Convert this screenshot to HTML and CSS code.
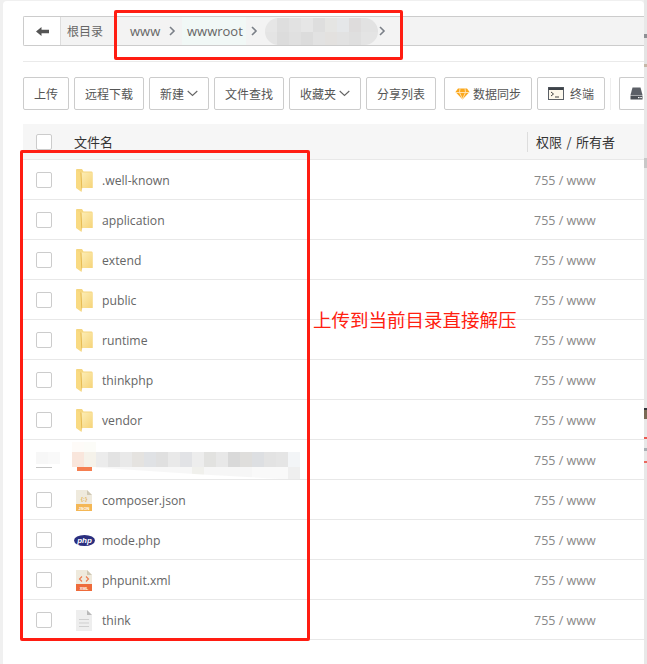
FILE: index.html
```html
<!DOCTYPE html>
<html lang="zh">
<head>
<meta charset="utf-8">
<title>文件管理</title>
<link rel="stylesheet" href="styles.css">
</head>
<body>
<svg class="defs" width="0" height="0" aria-hidden="true">
  <defs>
    <linearGradient id="folderBack" x1="0" y1="0" x2="1" y2="1">
      <stop offset="0" stop-color="#fdeeb8"/>
      <stop offset="1" stop-color="#f6d478"/>
    </linearGradient>
    <symbol id="folder" viewBox="0 0 17 23">
      <path d="M0 1 Q0 0 1 0 L6 0 L7.500 2.500 L15.500 2.500 Q16.500 2.500 16.500 3.500 L16.500 19 L0 19Z" fill="#f5d67f"/>
      <path d="M5 3.500 L16.500 3.500 L16.500 19 L5.500 19Z" fill="url(#folderBack)"/>
      <path d="M0 1 L4.500 3.500 L5.500 23 L0 19Z" fill="#f9da82"/>
      <path d="M4.500 3.500 L5.500 23 L6.200 19 L5.500 3.500Z" fill="#e5b94f"/>
    </symbol>
    <symbol id="chev" viewBox="0 0 8 10">
      <path d="M2 1 L6 5 L2 9" fill="none" stroke="#7b8088" stroke-width="1.600"/>
    </symbol>
    <symbol id="caret" viewBox="0 0 11 7">
      <path d="M.7 1 L5.500 5.500 L10.300 1" fill="none" stroke="#666" stroke-width="1.100"/>
    </symbol>
  </defs>
</svg>
<main class="panel">
  <nav class="crumbs">
    <button class="back" type="button" aria-label="返回">
      <svg width="13" height="9" viewBox="0 0 13 9"><path d="M0 4.500 L5.500 0 L5.500 2.800 L13 2.800 L13 6.200 L5.500 6.200 L5.500 9Z" fill="#555"/></svg>
    </button>
    <div class="trail">
      <span class="crumb root">根目录</span>
      <span class="crumb www">www</span>
      <svg class="chev" width="8" height="10"><use href="#chev"/></svg>
      <span class="crumb current">wwwroot</span>
      <svg class="chev" width="8" height="10"><use href="#chev"/></svg>
      <span class="crumb-blur"></span>
      <svg class="chev" width="8" height="10"><use href="#chev"/></svg>
    </div>
  </nav>
  <div class="rule"></div>
  <div class="toolbar">
    <button class="btn" type="button">上传</button>
    <button class="btn" type="button">远程下载</button>
    <button class="btn" type="button">新建<svg class="caret" width="11" height="7"><use href="#caret"/></svg></button>
    <button class="btn" type="button">文件查找</button>
    <button class="btn" type="button">收藏夹<svg class="caret" width="11" height="7"><use href="#caret"/></svg></button>
    <button class="btn" type="button">分享列表</button>
    <button class="btn sync" type="button">
      <svg class="ico" width="15" height="12" viewBox="0 0 15 12"><path d="M3 .5 L12 .5 L14.500 4 L7.500 11.500 L.5 4Z" fill="#fba81c"/><path d="M.5 4.500 L14.500 4.500 M4.500 4.500 L7.500 11 L10.500 4.500 M5 .5 L4.500 4.500 M10 .5 L10.500 4.500" stroke="#ffe7bd" stroke-width=".9" fill="none"/></svg>数据同步</button>
    <button class="btn term" type="button">
      <svg class="ico" width="16" height="13" viewBox="0 0 16 13"><rect x=".5" y=".5" width="15" height="12" fill="#fdf8ec" stroke="#5b6067"/><rect x=".5" y=".5" width="15" height="2.500" fill="#3d4249"/><path d="M3 5 L5.500 7 L3 9 M7 10 L11 10" fill="none" stroke="#444" stroke-width="1"/></svg>终端</button>
    <span class="divider"></span>
    <button class="btn drive" type="button">
      <svg width="13" height="13" viewBox="0 0 13 13"><path d="M2.500 .5 L10.500 .5 L12.500 8 L.5 8Z" fill="#5c6067"/><rect x=".5" y="8.500" width="12" height="4" fill="#4c5056"/><rect x="8" y="10" width="1.500" height="1.200" fill="#fff"/><rect x="10.300" y="10" width="1.500" height="1.200" fill="#fff"/></svg>
    </button>
  </div>

  <section class="table">
    <div class="row head">
      <span class="check"></span>
      <span class="head-name">文件名</span>
      <span class="head-perm">权限 / 所有者</span>
    </div>
    <div class="row"><span class="check"></span><span class="icon"><svg width="17" height="23"><use href="#folder"/></svg></span><span class="name">.well-known</span><span class="perm">755 / www</span></div>
    <div class="row"><span class="check"></span><span class="icon"><svg width="17" height="23"><use href="#folder"/></svg></span><span class="name">application</span><span class="perm">755 / www</span></div>
    <div class="row"><span class="check"></span><span class="icon"><svg width="17" height="23"><use href="#folder"/></svg></span><span class="name">extend</span><span class="perm">755 / www</span></div>
    <div class="row"><span class="check"></span><span class="icon"><svg width="17" height="23"><use href="#folder"/></svg></span><span class="name">public</span><span class="perm">755 / www</span></div>
    <div class="row"><span class="check"></span><span class="icon"><svg width="17" height="23"><use href="#folder"/></svg></span><span class="name">runtime</span><span class="perm">755 / www</span></div>
    <div class="row"><span class="check"></span><span class="icon"><svg width="17" height="23"><use href="#folder"/></svg></span><span class="name">thinkphp</span><span class="perm">755 / www</span></div>
    <div class="row"><span class="check"></span><span class="icon"><svg width="17" height="23"><use href="#folder"/></svg></span><span class="name">vendor</span><span class="perm">755 / www</span></div>
    <div class="row masked">
      <span class="check"></span><span class="icon"></span><span class="name"></span><span class="perm">755 / www</span>
      <span class="mask-check"></span>
      <span class="mask-sliver"></span>
      <span class="mask-top"></span>
      <span class="mask-upper"></span>
      <span class="mask-lower"></span>
      <span class="mask-tag"></span>
    </div>
    <div class="row"><span class="check"></span><span class="icon">
      <svg width="16" height="21" viewBox="0 0 16 21"><path d="M0 0 L11 0 L16 5 L16 21 L0 21Z" fill="#efeadd"/><path d="M11 0 L16 5 L11 5Z" fill="#cfc8b4"/><rect y="14" width="16" height="7" fill="#f4b755"/><text x="8" y="19.800" class="tag-text">JSON</text><text x="8" y="10.500" class="code-text json">{:}</text></svg>
    </span><span class="name">composer.json</span><span class="perm">755 / www</span></div>
    <div class="row"><span class="check"></span><span class="icon php-icon">
      <svg width="21" height="11" viewBox="0 0 21 11"><ellipse cx="10.500" cy="5.500" rx="10.500" ry="5.500" fill="#2b2f7f"/><text x="10.500" y="8" class="php-text">php</text></svg>
    </span><span class="name">mode.php</span><span class="perm">755 / www</span></div>
    <div class="row"><span class="check"></span><span class="icon">
      <svg width="16" height="21" viewBox="0 0 16 21"><path d="M0 0 L11 0 L16 5 L16 21 L0 21Z" fill="#efeadd"/><path d="M11 0 L16 5 L11 5Z" fill="#cfc8b4"/><rect y="14" width="16" height="7" fill="#ee6b3a"/><text x="8" y="19.800" class="tag-text">XML</text><path d="M6 6.500 L3.500 9 L6 11.500 M10 6.500 L12.500 9 L10 11.500" fill="none" stroke="#ee7a4c" stroke-width="1.100"/></svg>
    </span><span class="name">phpunit.xml</span><span class="perm">755 / www</span></div>
    <div class="row"><span class="check"></span><span class="icon">
      <svg width="16" height="21" viewBox="0 0 16 21"><path d="M0 0 L11 0 L16 5 L16 21 L0 21Z" fill="#eeeeee"/><path d="M11 0 L16 5 L11 5Z" fill="#b9b9b9"/><path d="M3 9.500 L13 9.500 M3 13 L13 13 M3 16.500 L13 16.500" stroke="#cfcfcf" stroke-width="1"/></svg>
    </span><span class="name">think</span><span class="perm">755 / www</span></div>
  </section>
</main>

<div class="mark mark-path"></div>
<div class="mark mark-list"></div>
<p class="note">上传到当前目录直接解压</p>
<div class="edge"></div>
</body>
</html>
```

FILE: styles.css
```css
* { box-sizing: border-box; }

html, body { height: 664px; overflow: hidden; }

body {
  position: relative;
  margin: 0;
  background: #f0f0f0;
  font-family: "Open Sans", "Noto Sans CJK SC", sans-serif;
  font-size: 12px;
  color: #555;
}

.defs { position: absolute; }

.panel {
  height: 663px;
  margin: 1px 3px 0;
  padding: 15px 0 0 20px;
  background: #fff;
  border-radius: 4px 4px 0 0;
  overflow: hidden;
}

/* breadcrumb */
.crumbs {
  display: flex;
  height: 30px;
  border: 1px solid #ccc;
  border-right: 0;
  border-radius: 2px 0 0 2px;
  background: #f3f3f3;
}

.back {
  width: 37px;
  padding: 0;
  border: 0;
  border-right: 1px solid #ddd;
  background: #fff;
  display: flex;
  align-items: center;
  justify-content: center;
}

.trail {
  flex: 1;
  display: flex;
  align-items: center;
}

.crumb { color: #666; line-height: 28px; }
.root { margin-left: 6px; width: 63px; font-family: "Noto Sans CJK SC", sans-serif; }
.www { font-size: 13px; width: 38px; }
.current { font-size: 13px; margin-left: 6px; padding: 0 5px; background: #f1f8f6; width: 64px; white-space: nowrap; }

.chev { flex: none; }
.trail .chev:nth-of-type(2) { margin-left: 4px; }

.crumb-blur {
  width: 113px;
  height: 27px;
  margin: 0 0 0 7px;
  border-radius: 14px;
  background:
    linear-gradient(90deg, #e4e4e4 0 12px, #dcdcdc 12px 24px, #e0e0e0 24px 36px, #dcdcdc 36px 48px, #e2e2e2 48px 60px, #e3e1df 60px 72px, #e2e2e2 72px 84px, #dfdfdf 84px 96px, #e4e4e4 96px) 0 14px / 100% 13px no-repeat,
    linear-gradient(90deg, #e6e6e6 0 12px, #dedede 12px 24px, #e2e2e2 24px 36px, #e6e6e6 36px 48px, #dedede 48px 60px, #e5e5e3 60px 72px, #e5e7e9 72px 84px, #dedcdc 84px 96px, #e2e2e2 96px) 0 0 / 100% 14px no-repeat;
}

.rule {
  height: 1px;
  margin-top: 15px;
  background: #eaeaea;
}

/* toolbar */
.toolbar {
  display: flex;
  align-items: center;
  gap: 5px;
  margin-top: 15px;
  height: 33px;
  white-space: nowrap;
}

.btn {
  flex: none;
  display: inline-flex;
  align-items: center;
  height: 33px;
  padding: 0 10px;
  border: 1px solid #ccc;
  border-radius: 2px;
  background: #fff;
  color: #555;
  font-family: "Noto Sans CJK SC", sans-serif;
  font-size: 12px;
}

.caret { margin-left: 3px; }
.sync { margin-left: 3px; }
.sync .ico { margin-right: 3px; }
.term .ico { margin-right: 6px; }
.divider { width: 1px; height: 32px; background: #eee; }
.drive { margin-left: 3px; padding: 0 0 0 10px; width: 25px; border-right: 0; border-radius: 2px 0 0 2px; }

/* table */
.table { margin-top: 14px; }

.row {
  position: relative;
  display: grid;
  grid-template-columns: 40px 26px 432px 1fr;
  align-items: center;
  height: 40px;
  padding: 1px 0 0 13px;
  border-bottom: 1px solid #e8e8e8;
}

.row.head {
  height: 36px;
  padding-top: 0;
  grid-template-columns: 38px 453px 1fr;
  background: #f6f6f6;
  color: #333;
  font-size: 13px;
  font-family: "Noto Sans CJK SC", sans-serif;
}

.check {
  display: block;
  width: 16px;
  height: 16px;
  border: 1px solid #ccc;
  border-radius: 2px;
  background: #fff;
}

.head-perm {
  padding-left: 8px;
  border-left: 1px solid #ddd;
  line-height: 20px;
  white-space: nowrap;
  word-spacing: 1.500px;
}

.icon { display: flex; align-items: center; height: 23px; }
.icon svg { display: block; }
.php-icon svg { margin-left: -2px; }
.name { color: #666; font-size: 12.200px; white-space: nowrap; }
.perm { color: #888; font-size: 12.500px; white-space: nowrap; }

.tag-text { font: 700 4px "Liberation Sans", sans-serif; fill: #fff; text-anchor: middle; }
.code-text { font: 700 6px "Liberation Sans", sans-serif; text-anchor: middle; }
.code-text.json { fill: #e6b765; }
.php-text { font: italic 700 8px "Liberation Sans", sans-serif; fill: #fff; text-anchor: middle; }

/* pixelated row */
.mask-check, .mask-sliver, .mask-top, .mask-upper, .mask-lower, .mask-tag { position: absolute; }
.masked .check { visibility: hidden; }
.mask-check { left: 13px; top: 12px; width: 24px; height: 12px; background: linear-gradient(90deg, #f7f7f7 0 12px, #f9f9f9 12px); }
.mask-sliver { left: 13px; top: 27px; width: 16px; height: 1px; background: #c4c4c4; }
.mask-top { left: 49px; top: 2px; width: 24px; height: 10px; background: linear-gradient(90deg, #fefbf8 0 12px, #fcfcf8 12px); }
.mask-upper {
  left: 49px; top: 12px; width: 228px; height: 15px;
  background: linear-gradient(90deg,
    #f9e6dc 0 12px, #f5f2ea 12px 24px, #ececec 24px 36px, #e3e3e3 36px 48px, #e9e9e9 48px 60px, #e5e3e0 60px 72px,
    #e0e2e5 72px 84px, #e0e0e0 84px 96px, #e9e9e9 96px 108px, #e2e3e6 108px 120px, #ededed 120px 132px, #e2e2e0 132px 144px,
    #e8e8e8 144px 156px, #d9d9d9 156px 168px, #dfdedc 168px 180px, #dddfe2 180px 192px, #e3e3e3 192px 204px, #e5e5e5 204px 216px, #f3f5f7 216px);
}
.mask-lower {
  left: 73px; top: 27px; width: 204px; height: 12px;
  clip-path: polygon(0 0, 100% 0, 100% 100%, 90% 100%, 50% 60%, 0 5%);
  background: linear-gradient(90deg,
    #f7f7f7 0 96px, #f0f0ec 96px 108px, #f6f6f6 108px 156px, #f9f9f9 156px 192px, #efefef 192px 204px, #f9f9f9 204px);
}
.mask-tag { left: 54px; top: 27px; width: 15px; height: 4px; background: #f57e50; }

/* annotations */
.mark { position: absolute; border: 3px solid #ff1d12; border-radius: 2px; pointer-events: none; }
.mark-path { left: 114px; top: 10px; width: 289px; height: 50px; }
.mark-list { left: 20px; top: 150px; width: 290px; height: 491px; }

.note {
  position: absolute;
  left: 313px;
  top: 305px;
  margin: 0;
  color: #ff2010;
  font: 18.500px/28px "Noto Sans CJK SC", sans-serif;
  white-space: nowrap;
}

.edge {
  position: absolute;
  right: 0;
  top: 0;
  width: 3px;
  height: 664px;
  background:
    linear-gradient(#0000 0 408px, #33363a 408px 410px, #7a6a55 410px 419px, #0000 419px 437px, #ea5a50 437px 439px, #0000 439px 448px, #aab0b5 448px 451px, #0000 451px 461px, #ea6a60 461px 463px, #0000 463px),
    linear-gradient(#e8e8e8 0 34px, #8d9094 34px 38px, #e4e4e4 38px 64px, #c5b8a8 64px 67px, #e8e8e8 67px 158px, #c8c8c8 158px 168px, #e8e8e8 168px);
}
```
